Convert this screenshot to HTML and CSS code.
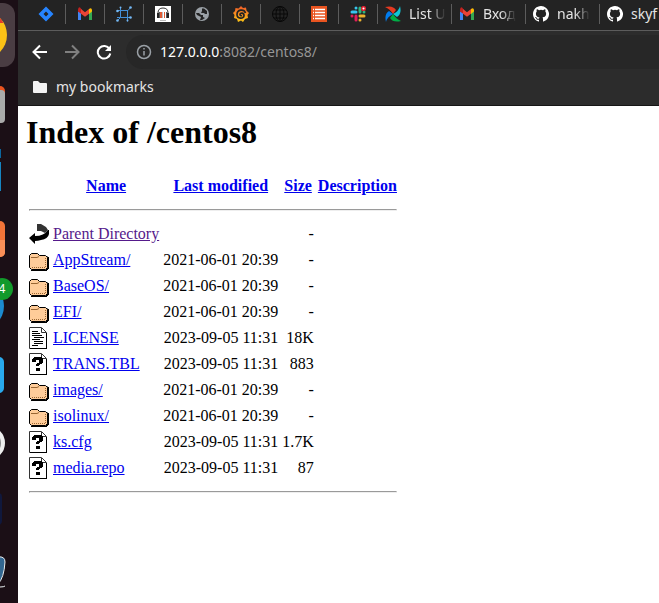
FILE: index.html
```html
<!DOCTYPE html>
<html lang="en">
<head>
<meta charset="utf-8">
<title>Index of /centos8</title>
<link rel="stylesheet" href="styles.css">
</head>
<body>
<svg class="defs" aria-hidden="true">
  <symbol id="gmail" viewBox="0 0 16 16"><path fill="#4285f4" d="M1 5v9h3V7z"/><path fill="#34a853" d="M12 7v7h3V5z"/><path fill="#c5221f" d="M1 3.500Q2-1 4.500 3.500V8L1 5.500z"/><path fill="#ea4335" d="M4 3l4 3.200L12 3v4.700l-4 3.100-4-3.100z"/><path fill="#fbbc04" d="M12 3q2.500-2 3 1v1.500L12 8z"/></symbol>
  <symbol id="github" viewBox="0 0 16 16"><path fill="#fff" d="M8 0C3.580 0 0 3.580 0 8c0 3.540 2.290 6.530 5.470 7.590.4.070.55-.17.55-.38 0-.19-.01-.82-.01-1.490-2.010.37-2.530-.49-2.690-.94-.09-.23-.48-.94-.82-1.130-.28-.15-.68-.52-.01-.53.63-.01 1.080.58 1.230.82.72 1.210 1.870.87 2.330.66.07-.52.28-.87.51-1.070-1.780-.2-3.640-.89-3.640-3.950 0-.87.31-1.590.82-2.150-.08-.2-.36-1.020.08-2.120 0 0 .67-.21 2.200.82a7.700 7.700 0 0 1 4 0c1.530-1.040 2.200-.82 2.200-.82.44 1.100.16 1.920.08 2.120.51.56.82 1.270.82 2.150 0 3.070-1.870 3.750-3.650 3.950.29.25.54.73.54 1.480 0 1.070-.01 1.930-.01 2.200 0 .21.15.46.55.38A8 8 0 0 0 8 0z"/></symbol>
  <symbol id="folder" viewBox="0 0 20 22"><path d="M2 21v1h16v-1h1v-1h1V8h-1v-.500h-2V21z"/><path fill="#fc9" stroke="#000" d="M.5 6.500l2-2h6l2 2h6l2 2v10l-2 2H2.500l-2-2z"/><path fill="none" stroke="#963" d="M2 8.500h6l2-1"/><path fill="none" stroke="#963" stroke-dasharray="1 1" d="M3 18.500h14M16.500 18V9"/></symbol>
  <symbol id="unknown" viewBox="0 0 20 22"><path fill="#fff" stroke="#333" d="M.5.500h12l5 5v16H.5z"/><path fill="none" stroke="#333" d="M12.500 1v4.500H17"/><path d="M17 6h1v16H1v-1h16z"/><path d="M4 5h1V4h8v1h1v5h-1v1h-2v1h-1v1H7v-2h1v-1h2V7H7v2H3V6h1zM7 15h4v3H7z"/></symbol>
  <symbol id="text" viewBox="0 0 20 22"><path fill="#fff" stroke="#333" d="M.5.500h12l5 5v16H.5z"/><path fill="none" stroke="#333" d="M12.500 1v4.500H17"/><path fill="none" stroke="#000" d="M3 4.500h6M3 6.500h8M3 8.500h10M5 10.500h10M3 12.500h8M5 14.500h9M5 16.500h9M3 18.500h6"/><path d="M17 6h1v16H1v-1h16z"/></symbol>
  <symbol id="back" viewBox="0 0 20 22"><path fill="#333" d="M8 1h4l5 3 2 3-3 3-4-2H8z"/><path d="M0 15l6-5v3q9 0 13-6h1v4q-1 5-8 6-3 1-6 1v3z"/></symbol>
</svg>
<nav class="dock" aria-label="Applications">
  <svg viewBox="0 0 18 68"><rect x="-40" y="3" width="55" height="64" rx="12" fill="#4a3d43"/><circle cx="-17" cy="35" r="24" fill="#fbc116"/><path fill="#e33b2e" d="M-17 10Q-4 10 3.500 23H-17z"/></svg>
  <svg viewBox="0 0 18 68"><rect x="-38" y="18" width="43" height="30" rx="5" fill="#e95420"/><rect x="-38" y="22" width="43" height="33" rx="4" fill="#aaa"/></svg>
  <svg viewBox="0 0 18 68"><path fill="#0b67a0" d="M0 13h1v9H0z"/><path fill="#1685c2" d="M0 26h1v29H0z"/></svg>
  <svg viewBox="0 0 18 68"><rect x="-38" y="17" width="43" height="36" rx="5" fill="#f37438"/><path fill="#fa8f58" d="M0 36h5v13q-1 4-5 4z"/></svg>
  <div class="app"><svg viewBox="0 0 18 68"><circle cx="-20" cy="34" r="24" fill="#1c8bd0"/></svg><span class="badge">4</span></div>
  <svg viewBox="0 0 18 68"><rect x="-38" y="17" width="42" height="36" rx="5" fill="#29a9ee"/></svg>
  <svg viewBox="0 0 18 68"><circle cx="-12" cy="35" r="15" fill="#888" stroke="#eee" stroke-width="4"/></svg>
  <svg viewBox="0 0 18 68"><rect x="-38" y="17" width="40" height="32" rx="4" fill="#10183c"/></svg>
  <svg viewBox="0 0 18 68"><path fill="#336791" stroke="#eee" d="M-2 13q7-1 7 5-1 16-7 22M0 43q4 0 5-1"/></svg>
</nav>
<div class="browser">
  <header>
    <div class="tabs">
      <button class="tab" aria-label="Jira"><svg viewBox="0 0 16 16"><path fill="#2684ff" fill-rule="evenodd" d="M8 .5L15.500 8 8 15.500.5 8zM8 5.500L5.500 8 8 10.500 10.500 8z"/></svg></button>
      <button class="tab" aria-label="Gmail"><svg><use href="#gmail"/></svg></button>
      <button class="tab" aria-label="Network"><svg viewBox="0 0 16 16"><g fill="none" stroke="#438fd8"><path d="M4.500 1v10.500H1M4.500 4.500H12L15 1M11.500 4.500v11M4.500 11.500H15M4.500 11.500L1 15M1 4.500h3"/></g><g fill="#75b9f5"><circle cx="4.500" cy="1.500" r="1"/><circle cx="14.500" cy="1.500" r="1.300"/><circle cx="1.500" cy="5" r="1.300"/><circle cx="1.500" cy="14.500" r="1.300"/><circle cx="11.500" cy="14.500" r="1"/><circle cx="14.500" cy="11.500" r="1.300"/></g></svg></button>
      <button class="tab" aria-label="Books"><svg viewBox="0 0 16 16"><path fill="#fff" d="M0 0h16v16H0z"/><path fill="none" stroke="#333" d="M3 8V7q0-5 5-5t5 5v1"/><path fill="#222" d="M2 7h2v5H2zM12 7h2v5h-2z"/><path fill="#555" d="M4 6h1v6H4zM11 6h1v6h-1z"/><path fill="#e15b35" d="M5 6h2v6H5zM9 6h1v6H9z"/><path fill="#bbb" d="M7 6h1v6H7zM5 14h6v1H5z"/></svg></button>
      <button class="tab" aria-label="Site"><svg viewBox="0 0 16 16"><circle cx="8" cy="8" r="7" fill="#9aa0a6"/><path fill="#232323" d="M8 2.500h2L13 5v3h-2l-1-1H7l1-2zM2 7h3l2 2h2v2l2 1-3 2H6l1-3-4-2z"/></svg></button>
      <button class="tab" aria-label="Grafana"><svg viewBox="0 0 16 16"><defs><linearGradient id="sun" x2="0" y2="1"><stop stop-color="#f15a29"/><stop offset="1" stop-color="#fbc515"/></linearGradient></defs><path fill="url(#sun)" d="M8 0l2 2 3-.5.5 3L16 7l-1.500 2 .5 3-3 1-2 3-2-1.500L5 16l-1-3-3-1 .5-3L0 7l2-2 .5-3 3 .5z"/><path fill="none" stroke="#232323" stroke-width="1.700" d="M12.500 7C11 2.500 4 3.500 4 8.500c0 4.500 7 5 7 1 0-3-4-3-4-1 0 1 1 1.500 2 1"/></svg></button>
      <button class="tab" aria-label="Web"><svg viewBox="0 0 16 16"><g fill="none" stroke="#080808"><circle cx="8" cy="8" r="7.500"/><ellipse cx="8" cy="8" rx="4" ry="7.500"/><path d="M8 0v16M0 8h16M2 4h12M2 12h12"/></g></svg></button>
      <button class="tab" aria-label="List"><svg viewBox="0 0 16 16"><path fill="#e95420" d="M0 0h16v16H0z"/><path stroke="#fff" d="M2 3.500h1m1 0h10M2 6.500h1m1 0h10M2 9.500h1m1 0h10M2 12.500h1m1 0h10" stroke-width="1.500"/></svg></button>
      <button class="tab" aria-label="Slack"><svg viewBox="0 0 16 16"><g fill="none" stroke-width="3" stroke-linecap="round"><path stroke="#36c5f0" d="M2 6h4M6 2v0"/><path stroke="#2eb67d" d="M10 2v4M14 6h0"/><path stroke="#ecb22e" d="M10 10h4M10 14v0"/><path stroke="#e01e5a" d="M2 10h0M6 10v4"/></g><circle cx="13.500" cy="2.500" r="1.800" fill="#fff" stroke="#e02030" stroke-width="1.500"/></svg></button>
      <button class="tab wide"><svg viewBox="0 0 16 16"><path fill="#e43921" d="M0 1Q8-1 11 4L8 8Q5 3 0 1z"/><path fill="#11c5d5" d="M15 0q2 8-3 11L8 8q6-3 7-8z"/><path fill="#00ad46" d="M16 15Q8 17 5 12l3-4q3 5 8 7z"/><path fill="#017cee" d="M1 16Q-1 8 4 5l4 3q-6 3-7 8z"/></svg><span>List U</span></button>
      <button class="tab wide"><svg><use href="#gmail"/></svg><span>Вход</span></button>
      <button class="tab wide"><svg><use href="#github"/></svg><span>nakh</span></button>
      <button class="tab wide last"><svg><use href="#github"/></svg><span>skyf</span></button>
    </div>
    <div class="toolbar">
      <button aria-label="Back"><svg viewBox="0 0 16 16"><path d="M15 8H2M8 1.500L1.500 8 8 14.500"/></svg></button>
      <button class="dim" aria-label="Forward"><svg viewBox="0 0 16 16"><path d="M1 8h13M8 1.500L14.500 8 8 14.500"/></svg></button>
      <button aria-label="Reload"><svg viewBox="0 0 16 16"><path d="M13.500 5A6.300 6.300 0 1 0 14.300 9.500"/><path class="solid" d="M15 1v6H9z"/></svg></button>
      <div class="address"><svg viewBox="0 0 16 16"><circle cx="8" cy="8" r="6.500"/><path d="M8 7v4.500M8 4v1.500"/></svg><a href="#"><b>127.0.0.0</b>:8082/centos8/</a></div>
    </div>
    <div class="bookmarks"><button><svg viewBox="0 0 16 16"><path d="M1 3q0-1 1-1h4l2 2h6q1 0 1 1v8q0 1-1 1H2q-1 0-1-1z"/></svg>my bookmarks</button></div>
  </header>
  <main>
    <h1>Index of /centos8</h1>
    <table>
      <tr class="head"><th></th><th><a href="#">Name</a></th><th><a href="#">Last modified</a></th><th><a href="#">Size</a></th><th><a href="#">Description</a></th></tr>
      <tr><td colspan="5"><hr></td></tr>
      <tr><td><svg><use href="#back"/></svg></td><td><a class="visited" href="#">Parent Directory</a></td><td></td><td>-</td><td></td></tr>
      <tr><td><svg><use href="#folder"/></svg></td><td><a href="#">AppStream/</a></td><td>2021-06-01 20:39</td><td>-</td><td></td></tr>
      <tr><td><svg><use href="#folder"/></svg></td><td><a href="#">BaseOS/</a></td><td>2021-06-01 20:39</td><td>-</td><td></td></tr>
      <tr><td><svg><use href="#folder"/></svg></td><td><a href="#">EFI/</a></td><td>2021-06-01 20:39</td><td>-</td><td></td></tr>
      <tr><td><svg><use href="#text"/></svg></td><td><a href="#">LICENSE</a></td><td>2023-09-05 11:31</td><td>18K</td><td></td></tr>
      <tr><td><svg><use href="#unknown"/></svg></td><td><a href="#">TRANS.TBL</a></td><td>2023-09-05 11:31</td><td>883</td><td></td></tr>
      <tr><td><svg><use href="#folder"/></svg></td><td><a href="#">images/</a></td><td>2021-06-01 20:39</td><td>-</td><td></td></tr>
      <tr><td><svg><use href="#folder"/></svg></td><td><a href="#">isolinux/</a></td><td>2021-06-01 20:39</td><td>-</td><td></td></tr>
      <tr><td><svg><use href="#unknown"/></svg></td><td><a href="#">ks.cfg</a></td><td>2023-09-05 11:31</td><td>1.7K</td><td></td></tr>
      <tr><td><svg><use href="#unknown"/></svg></td><td><a href="#">media.repo</a></td><td>2023-09-05 11:31</td><td>87</td><td></td></tr>
      <tr><td colspan="5"><hr></td></tr>
    </table>
  </main>
</div>
</body>
</html>
```
FILE: styles.css
```css
* { box-sizing: border-box; }
body { margin: 0; display: flex; min-height: 100vh; background: #fff; }
svg { display: block; flex: none; }
button { border: 0; padding: 0; background: none; font: inherit; color: inherit; }
.defs { display: none; }

.dock { width: 18px; height: 100vh; flex: none; overflow: hidden; background: #1b0f16; display: flex; flex-direction: column; }
.dock svg { width: 18px; height: 68px; }
.app { position: relative; }
.badge { position: absolute; left: -9px; top: 6px; width: 22px; height: 22px; border-radius: 50%; background: #129a2b; color: #fff; font: 12px/22px "Noto Sans", sans-serif; text-align: center; }

.browser { flex: 1; min-width: 0; }
header { background: #2c2c2c; color: #e4e4e4; font: 14px/20px "Noto Sans", sans-serif; border-bottom: 1px solid #161616; }
.tabs { display: flex; height: 31px; padding: 4px 0 6px 9px; overflow: hidden; background: #232323; border-bottom: 1px solid #5c5c5c; }
.tab { flex: none; width: 39px; display: flex; align-items: center; justify-content: center; border-right: 1px solid #5c5c5c; }
.tab svg { width: 16px; height: 16px; }
.wide { width: 74px; justify-content: flex-start; gap: 8px; padding-left: 7px; }
.wide span { white-space: nowrap; -webkit-mask-image: linear-gradient(90deg, #000 55%, transparent); mask-image: linear-gradient(90deg, #000 55%, transparent); }
.last span { -webkit-mask-image: none; mask-image: none; }

.toolbar { display: flex; align-items: center; gap: 16px; padding: 4px 0 0 14px; }
.toolbar svg { width: 16px; height: 16px; fill: none; stroke: #fff; stroke-width: 2; }
.toolbar .dim svg { stroke: #808080; }
.toolbar .solid { fill: #fff; stroke: none; }
.address { flex: 1; height: 34px; margin-left: -2px; padding-left: 10px; display: flex; align-items: center; gap: 8px; border-radius: 17px 0 0 17px; background: #272727; }
.address svg { stroke: #9aa0a6; stroke-width: 1.5; }
.address a { color: #969696; text-decoration: none; }
.address b { color: #fff; font-weight: 400; }
.bookmarks { display: flex; padding: 8px 14px; }
.bookmarks button { display: flex; align-items: center; gap: 8px; }
.bookmarks svg { width: 16px; height: 16px; fill: #f4f4f4; }

main { padding: 8px; color: #000; font: 16px/18px "Liberation Serif", serif; }
h1 { margin: 0 0 21px; font-size: 32px; line-height: 37px; }
table { border-spacing: 2px; }
th, td { padding: 1px; white-space: nowrap; }
.head { height: 24px; }
td:nth-child(n+3) { text-align: right; }
td svg { width: 20px; height: 22px; }
hr { margin: 8px 0; }
a { color: #00e; }
.visited { color: #551a8b; }
```
